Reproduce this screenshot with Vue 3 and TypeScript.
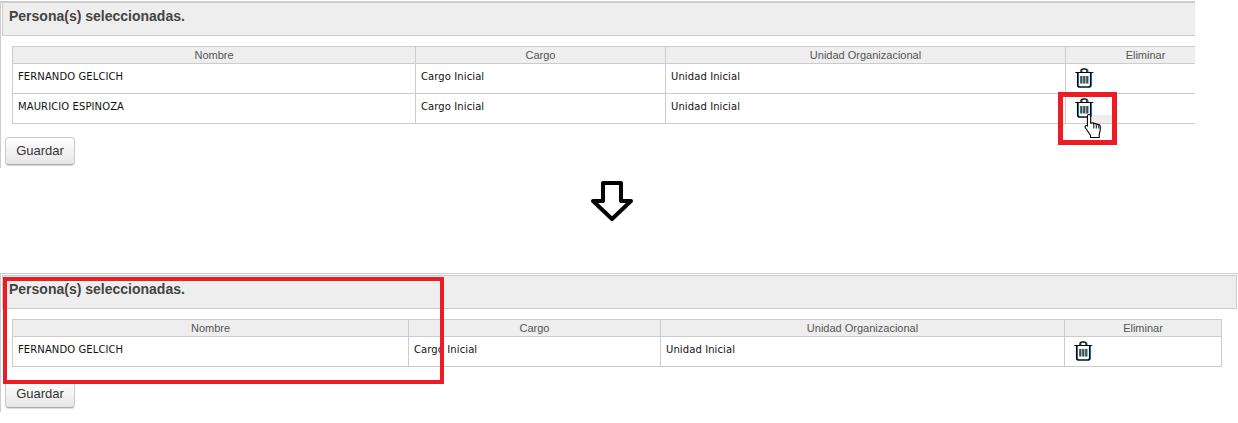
<script setup lang="ts">
interface Panel {
  cols: number[]
  rows: string[]
  width: string
}
const panels: Panel[] = [
  { cols: [403, 250, 400, 160], rows: ['FERNANDO GELCICH', 'MAURICIO ESPINOZA'], width: '1213px' },
  { cols: [396, 252, 404, 157], rows: ['FERNANDO GELCICH'], width: '1209px' },
]
const layers = ['#e08a00', '#0a78c8', '#000']
</script>

<template>
  <div class="page">
    <svg width="0" height="0" class="defs">
      <symbol id="trash" viewBox="0 0 18 20">
        <g fill="none" stroke-width="1.1">
          <path d="M.5 4.500h17M6 4.500V2.800C6 1.600 6.800 1 8 1h2c1.200 0 2 .6 2 1.800v1.700" />
          <path d="M2.500 4.500V17c0 1.200.8 2 2 2h9c1.200 0 2-.8 2-2V4.500" />
          <path d="M6 8v7.500M9 8v7.500M12 8v7.500" stroke-width="1" />
        </g>
      </symbol>
    </svg>

    <section class="panel first">
      <h2 class="title">Persona(s) seleccionadas.</h2>
      <div class="table-wrap">
        <table class="grid" :style="{ width: panels[0].width }">
          <colgroup>
            <col v-for="(c, i) in panels[0].cols" :key="i" :style="{ width: c + 'px' }" />
          </colgroup>
          <thead>
            <tr><th>Nombre</th><th>Cargo</th><th>Unidad Organizacional</th><th>Eliminar</th></tr>
          </thead>
          <tbody>
            <tr v-for="r in panels[0].rows" :key="r">
              <td>{{ r }}</td>
              <td>Cargo Inicial</td>
              <td>Unidad Inicial</td>
              <td class="icon-cell">
                <span class="trash">
                  <svg v-for="(l, k) in layers" :key="k" :class="'layer l' + k" :style="{ stroke: l }" width="18" height="20"><use href="#trash" /></svg>
                </span>
              </td>
            </tr>
          </tbody>
        </table>
      </div>
      <button class="save" type="button">Guardar</button>
    </section>

    <div class="arrow-row">
      <svg width="44" height="42" viewBox="0 0 44 42">
        <path d="M13 3h18v18h10L22 39 3 21h10z" fill="#fff" stroke="#000" stroke-width="4" stroke-linejoin="round" />
      </svg>
    </div>

    <section class="panel second">
      <h2 class="title">Persona(s) seleccionadas.</h2>
      <div class="table-wrap">
        <table class="grid" :style="{ width: panels[1].width }">
          <colgroup>
            <col v-for="(c, i) in panels[1].cols" :key="i" :style="{ width: c + 'px' }" />
          </colgroup>
          <thead>
            <tr><th>Nombre</th><th>Cargo</th><th>Unidad Organizacional</th><th>Eliminar</th></tr>
          </thead>
          <tbody>
            <tr v-for="r in panels[1].rows" :key="r">
              <td>{{ r }}</td>
              <td>Cargo Inicial</td>
              <td>Unidad Inicial</td>
              <td class="icon-cell">
                <span class="trash">
                  <svg v-for="(l, k) in layers" :key="k" :class="'layer l' + k" :style="{ stroke: l }" width="18" height="20"><use href="#trash" /></svg>
                </span>
              </td>
            </tr>
          </tbody>
        </table>
      </div>
      <button class="save" type="button">Guardar</button>
    </section>

    <div class="hover-strip"></div>
    <div class="mark mark-trash"></div>
    <div class="mark mark-row"></div>
    <svg class="cursor" width="20" height="26" viewBox="0 0 20 26">
      <path d="M5 1.500c1 0 1.700.8 1.700 1.800v7l1.300-.4c.8-.2 1.500.1 1.800.7 .8-.4 1.600-.2 2 .5 .8-.4 1.700-.1 2 .6 1-.3 2.200.2 2.400 1.400 .3 2 .2 5-1 8.400v3H6.500v-2.300L1.500 15c-.8-1.200-.3-2.300.7-2.500.8-.1 1.300.2 1.200.8V3.300C3.400 2.300 4 1.500 5 1.500z" fill="#fff" stroke="#000" stroke-width="1.100" stroke-linejoin="round" />
      <path d="M9.800 11v4.500M12.300 11.500v4M14.800 12v3.500" fill="none" stroke="#000" stroke-width="1" />
    </svg>
  </div>
</template>

<style>
html, body { margin: 0; background: #fff; }
</style>

<style scoped>
.page {
  position: relative;
  width: 1238px;
  height: 423px;
  overflow: hidden;
  font-family: "Liberation Sans", Arial, sans-serif;
  background: #fff;
}
.defs { position: absolute; }
.panel {
  box-sizing: border-box;
  border-top: 2px solid #ccc;
  border-left: 1px solid #ccc;
  overflow: hidden;
}
.first {
  width: 1195px;
  height: 167px;
  margin-top: 1px;
}
.second {
  width: 1238px;
  height: 139px;
  border-top-width: 1px;
}
.arrow-row {
  height: 105px;
  padding-left: 590px;
  padding-top: 12px;
  box-sizing: border-box;
}
.arrow-row svg { display: block; }
.title {
  box-sizing: border-box;
  margin: 0 0 10px 1px;
  height: 33px;
  padding: 5px 6px 0;
  background: #eee;
  border: 1px solid #ccc;
  border-top: 0;
  font-size: 14px;
  line-height: 16px;
  font-weight: 700;
  color: #444;
}
.first .title { width: 1194px; border-right: 0; }
.second .title { width: 1235px; margin-top: 1px; border-top: 1px solid #ccc; height: 34px; }
.table-wrap { padding-left: 11px; }
.grid {
  border-collapse: collapse;
  table-layout: fixed;
}
.grid th {
  height: 16px;
  padding: 0;
  background: #eee;
  border: 1px solid #ccc;
  font-size: 11px;
  line-height: 16px;
  font-weight: 400;
  color: #555;
  text-align: center;
}
.grid td {
  box-sizing: border-box;
  height: 30px;
  padding: 0 0 4px 5px;
  border: 1px solid #ccc;
  font-family: "DejaVu Sans", Verdana, sans-serif;
  font-size: 10px;
  letter-spacing: .1px;
  line-height: 16px;
  color: #111;
}
.grid td.icon-cell { padding: 0 0 1px 9px; }
.trash {
  position: relative;
  display: block;
  width: 18px;
  height: 20px;
}
.layer { position: absolute; top: 0; left: 0; }
.l0 { left: -0.5px; }
.l1 { left: 0.5px; }
.save {
  display: block;
  box-sizing: border-box;
  width: 70px;
  height: 28px;
  margin: 13px 0 0 4px;
  padding: 0 0 1px;
  background: linear-gradient(#fff, #e6e6e6);
  border: 1px solid #ccc;
  border-bottom-color: #aaa;
  border-radius: 4px;
  box-shadow: 0 1px 1px rgba(0, 0, 0, .15);
  font-family: "Liberation Sans", Arial, sans-serif;
  font-size: 13px;
  color: #333;
}
.mark {
  position: absolute;
  box-sizing: border-box;
  border-style: solid;
  border-color: #ed1c24;
}
.mark-trash {
  left: 1058px;
  top: 92px;
  width: 59px;
  height: 53px;
  border-width: 5px;
}
.mark-row {
  left: 3px;
  top: 277px;
  width: 441px;
  height: 107px;
  border-width: 4px;
}
.hover-strip {
  position: absolute;
  left: 1092px;
  top: 115px;
  width: 20px;
  height: 8px;
  background: #eee;
}
.cursor {
  position: absolute;
  left: 1084px;
  top: 113px;
}
</style>
